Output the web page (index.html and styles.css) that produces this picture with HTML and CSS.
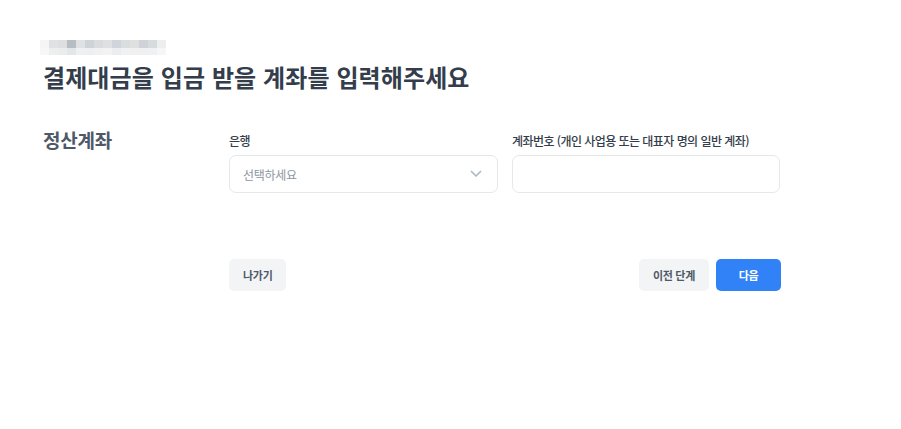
FILE: index.html
```html
<!DOCTYPE html>
<html lang="ko">
<head>
<meta charset="utf-8">
<title>정산계좌</title>
<link rel="stylesheet" href="styles.css">
</head>
<body>
<main class="page">
  <div class="crumb" aria-hidden="true">
    <div class="crumb-row crumb-top"></div>
    <div class="crumb-row crumb-bottom"></div>
  </div>
  <h1 class="title">결제대금을 입금 받을 계좌를 입력해주세요</h1>
  <section class="section">
    <h2 class="section-label">정산계좌</h2>
    <div class="section-body">
      <div class="fields">
        <div class="field">
          <label class="field-label">은행</label>
          <div class="select">
            <span class="placeholder">선택하세요</span>
            <svg class="chevron" width="12" height="8" viewBox="0 0 12 8"><path d="M1.5 1.5 L6 6 L10.5 1.5" fill="none" stroke="#b0b8c1" stroke-width="1.7" stroke-linecap="round" stroke-linejoin="round"/></svg>
          </div>
        </div>
        <div class="field">
          <label class="field-label">계좌번호 (개인 사업용 또는 대표자 명의 일반 계좌)</label>
          <div class="input"></div>
        </div>
      </div>
      <div class="actions">
        <button class="btn btn-gray">나가기</button>
        <div class="actions-right">
          <button class="btn btn-gray">이전 단계</button>
          <button class="btn btn-blue">다음</button>
        </div>
      </div>
    </div>
  </section>
</main>
</body>
</html>
```

FILE: styles.css
```css
* { box-sizing: border-box; }
html, body { margin: 0; background: #ffffff; }
body {
  font-family: "Noto Sans CJK KR", "Noto Sans", sans-serif;
  color: #333d4b;
}
.page {
  padding: 40px 0 0 40px;
  width: 781px;
}
.crumb { width: 126px; display: flex; flex-direction: column; }
.crumb-row { height: 7.5px; }
.crumb-top {
  background: linear-gradient(to right,
    #f5f5f5 0 9px, #dfe1e3 9px 18px, #dcdfe1 18px 27px, #b7bec3 27px 36px,
    #dfe1e2 36px 45px, #ced3d7 45px 54px, #d9dcdf 54px 63px, #dfe0e1 63px 72px,
    #cfd5db 72px 81px, #d9dde0 81px 90px, #dedfdf 90px 99px, #cdd3d7 99px 108px,
    #d6dcde 108px 117px, #eceef0 117px 126px);
}
.crumb-bottom {
  background: linear-gradient(to right,
    #f7f7f7 0 9px, #eceeef 9px 18px, #ebeded 18px 27px, #e2e7e7 27px 36px,
    #eef0f1 36px 45px, #edeff0 45px 54px, #f0f1f2 54px 63px, #f3f3f3 63px 72px,
    #ebeef0 72px 81px, #eff1f2 81px 90px, #f0f0f0 90px 99px, #eef0f1 99px 108px,
    #eff1f2 108px 117px, #f6f6f7 117px 126px);
}
.title {
  margin: 6px 0 0 3px;
  font-size: 24px;
  line-height: 32px;
  font-weight: 700;
  letter-spacing: 0.1px;
  color: #333d4b;
}
.section {
  display: flex;
  margin-top: 34px;
}
.section-label {
  width: 189px;
  margin: 0;
  padding-left: 3px;
  font-size: 19px;
  line-height: 26px;
  font-weight: 700;
  letter-spacing: -0.2px;
  color: #4e5968;
}
.section-body { flex: 1; }
.fields {
  display: grid;
  grid-template-columns: 269px 268px;
  column-gap: 14px;
  padding-top: 6px;
}
.field { display: flex; flex-direction: column; }
.field-label {
  font-size: 12px;
  line-height: 16px;
  font-weight: 500;
  letter-spacing: -0.55px;
  color: #333d4b;
  margin-bottom: 6px;
}
.select, .input {
  height: 38px;
  border: 1px solid #e5e8eb;
  border-radius: 7px;
  background: #fff;
}
.select {
  display: flex;
  align-items: center;
  justify-content: space-between;
  padding: 0 15px 0 13px;
}
.placeholder {
  font-size: 12px;
  letter-spacing: -0.3px;
  color: #8b95a1;
}
.chevron { display: block; }
.actions {
  display: flex;
  justify-content: space-between;
  margin-top: 66px;
}
.actions-right { display: flex; gap: 7px; }
.btn {
  height: 32px;
  border: none;
  border-radius: 5px;
  padding: 0 14px;
  font-family: inherit;
  font-size: 11px;
  font-weight: 700;
  letter-spacing: -0.3px;
  cursor: pointer;
}
.btn-gray { background: #f2f4f6; color: #4e5968; }
.btn-blue { background: #3182f6; color: #ffffff; width: 65px; padding: 0; }
```
